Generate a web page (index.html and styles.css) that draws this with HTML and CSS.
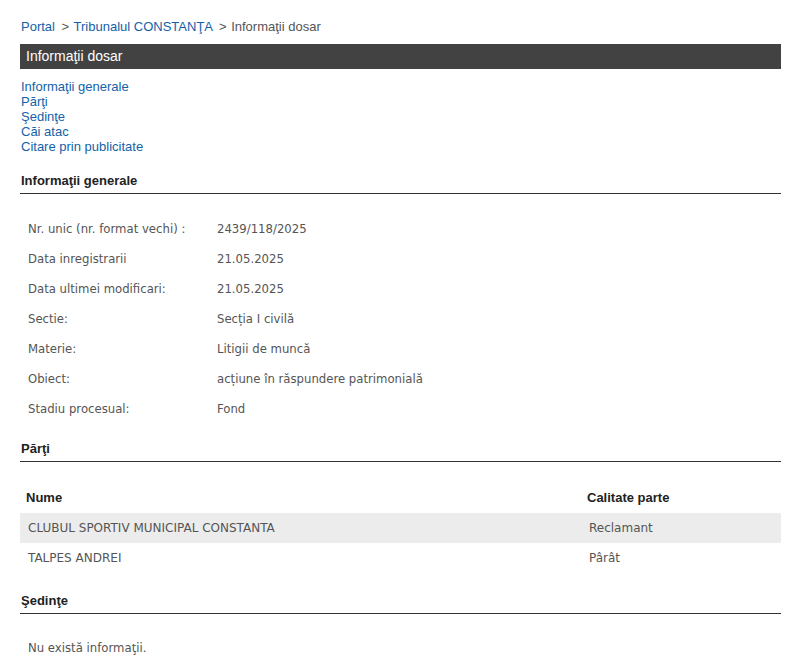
FILE: index.html
```html
<!DOCTYPE html>
<html lang="ro">
<head>
<meta charset="utf-8">
<title>Informaţii dosar</title>
<link rel="stylesheet" href="styles.css">
</head>
<body>
<div class="page">
  <div class="crumbs">
    <a href="#" class="link">Portal</a>
    <span class="sep">&gt;</span>
    <a href="#" class="link">Tribunalul CONSTANŢA</a>
    <span class="sep">&gt;</span>
    <span class="current">Informaţii dosar</span>
  </div>
  <div class="titlebar">Informaţii dosar</div>
  <ul class="toc">
    <li><a href="#" class="link">Informaţii generale</a></li>
    <li><a href="#" class="link">Părţi</a></li>
    <li><a href="#" class="link">Şedinţe</a></li>
    <li><a href="#" class="link">Căi atac</a></li>
    <li><a href="#" class="link">Citare prin publicitate</a></li>
  </ul>

  <h2 class="section">Informaţii generale</h2>
  <table class="info">
    <tr><td class="lbl">Nr. unic (nr. format vechi) :</td><td>2439/118/2025</td></tr>
    <tr><td class="lbl">Data inregistrarii</td><td>21.05.2025</td></tr>
    <tr><td class="lbl">Data ultimei modificari:</td><td>21.05.2025</td></tr>
    <tr><td class="lbl">Sectie:</td><td>Secția I civilă</td></tr>
    <tr><td class="lbl">Materie:</td><td>Litigii de muncă</td></tr>
    <tr><td class="lbl">Obiect:</td><td>acțiune în răspundere patrimonială</td></tr>
    <tr><td class="lbl">Stadiu procesual:</td><td>Fond</td></tr>
  </table>

  <h2 class="section">Părţi</h2>
  <table class="parti">
    <tr class="head"><th class="c1">Nume</th><th>Calitate parte</th></tr>
    <tr class="alt"><td class="c1">CLUBUL SPORTIV MUNICIPAL CONSTANTA</td><td>Reclamant</td></tr>
    <tr><td class="c1">TALPES ANDREI</td><td>Pârât</td></tr>
  </table>

  <h2 class="section">Şedinţe</h2>
  <p class="empty">Nu există informaţii.</p>
</div>
</body>
</html>
```

FILE: styles.css
```css
html, body {
  margin: 0;
  padding: 0;
  background: #ffffff;
}
body {
  font-family: "Liberation Sans", Arial, sans-serif;
  font-size: 13px;
  color: #333;
}
.page {
  width: 761px;
  margin-left: 20px;
  padding-top: 18px;
}
.link {
  color: #1462a8;
  text-decoration: none;
}
.crumbs {
  height: 18px;
  line-height: 18px;
  padding-left: 1px;
  font-size: 13px;
  color: #555;
}
.crumbs .sep {
  margin: 0 1px 0 3px;
  color: #555;
}
.titlebar {
  margin-top: 8px;
  height: 25px;
  line-height: 24px;
  background: #434242;
  color: #fff;
  font-size: 14px;
  padding-left: 6px;
}
.toc {
  list-style: none;
  margin: 10px 0 0 0;
  padding: 0 0 0 1px;
}
.toc li {
  line-height: 15px;
  font-size: 13px;
}
.section {
  margin: 6px 0 0 0;
  font-size: 13px;
  font-weight: bold;
  color: #222;
  padding: 0 0 4px 1px;
  border-bottom: 1px solid #333;
  line-height: 16px;
}
.toc + .section {
  margin-top: 19px;
}
.info {
  border-collapse: collapse;
  margin-top: 20px;
  margin-bottom: 17px;
  font-family: "DejaVu Sans", Verdana, sans-serif;
  font-size: 11.7px;
  color: #555;
}
.info td {
  height: 30px;
  padding: 0 0 0 8px;
  vertical-align: middle;
}
.info td.lbl {
  width: 181px;
}
.parti {
  width: 100%;
  border-collapse: collapse;
  margin-top: 19px;
  margin-bottom: 20px;
  font-family: "DejaVu Sans", Verdana, sans-serif;
  font-size: 12px;
  color: #555;
}
.parti th {
  font-family: "Liberation Sans", Arial, sans-serif;
  font-size: 13px;
  font-weight: bold;
  color: #222;
  text-align: left;
  height: 32px;
  padding: 0 0 0 6px;
}
.parti td {
  height: 30px;
  padding: 0 0 0 8px;
}
.parti td.c1 {
  width: 553px;
}
.parti th.c1 {
  width: 555px;
}
.parti tr.alt td {
  background: #ececec;
}
.empty {
  margin: 27px 0 0 8px;
  font-family: "DejaVu Sans", Verdana, sans-serif;
  font-size: 11.7px;
  color: #555;
}
```
